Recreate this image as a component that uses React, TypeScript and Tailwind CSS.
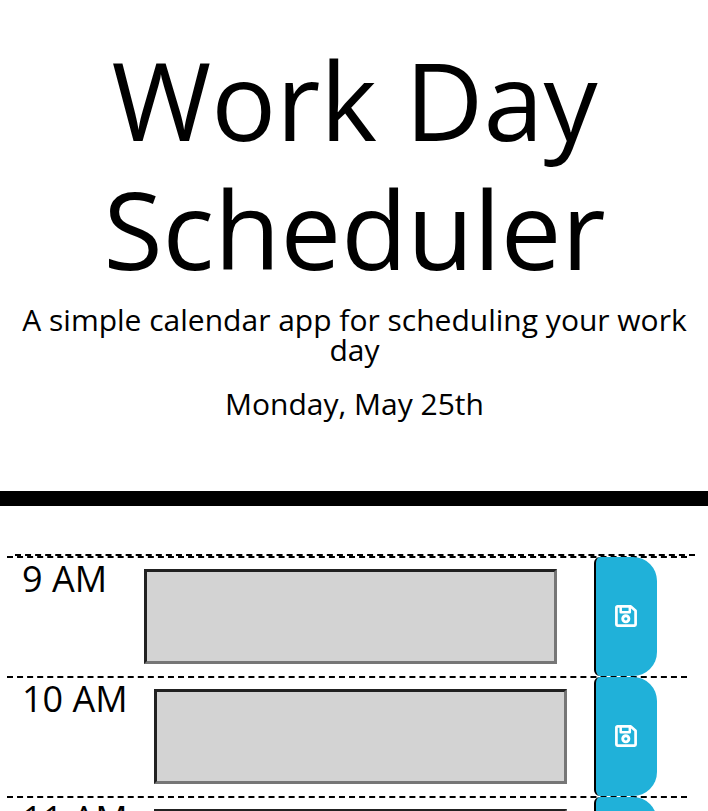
const rows = [
  { hour: '9 AM', label: 'w-[122px]', gap: 'w-[37px]' },
  { hour: '10 AM', label: 'w-[132px]', gap: 'w-[27px]' },
  { hour: '11 AM', label: 'w-[132px]', gap: 'w-[27px]' },
];

function SaveIcon() {
  return (
    <svg viewBox="0 0 22 22" className="mr-[2px] mb-px h-[22px] w-[22px] fill-none stroke-white">
      <path strokeWidth="2.7" strokeLinejoin="round" d="M2.4 1.4H15.800l4.800 4.300v13.900a1 1 0 0 1-1 1H2.400a1 1 0 0 1-1-1V2.400a1 1 0 0 1 1-1Z" />
      <path strokeWidth="2.500" strokeLinejoin="round" d="M5.700 1.500V7.200H14.800V1.500" />
      <circle cx="10.800" cy="13.800" r="3.100" strokeWidth="2.900" />
    </svg>
  );
}

export default function App() {
  return (
    <div className="h-[811px] overflow-hidden bg-white text-black font-['Open_Sans',sans-serif]">
      <header className="h-[506px] border-b-[15px] border-black pr-[15px] pl-4 pt-[35px] text-center">
        <h1 className="text-[108px] leading-[129px]">Work Day Scheduler</h1>
        <p className="mt-3 text-[30px] leading-[30px]">A simple calendar app for scheduling your work day</p>
        <p className="mt-6 text-[30px] leading-[30px]">Monday, May 25th</p>
      </header>
      <main className="mt-12 ml-[15px] w-[680px] border-t-2 border-dashed border-black">
        {rows.map((row) => (
          <div key={row.hour} className="-ml-2 flex h-[120px] w-[680px] border-t-2 border-dashed border-black pl-[15px]">
            <span className={`${row.label} shrink-0 text-[36px] leading-[41px]`}>{row.hour}</span>
            <textarea aria-label={row.hour} className="mt-[11px] block h-[95px] w-[413px] shrink-0 resize-none border-[3px] border-t-[#212121] border-r-[#767676] border-b-[#767676] border-l-[#212121] bg-[#d3d3d3] outline-none" />
            <span className={`${row.gap} shrink-0`} />
            <button aria-label="Save" className="-mt-px flex h-[119px] w-[63px] shrink-0 items-center justify-center rounded-l-[6px] rounded-r-[24px] border-l-2 border-black bg-[#20b1d9]">
              <SaveIcon />
            </button>
          </div>
        ))}
      </main>
    </div>
  );
}
